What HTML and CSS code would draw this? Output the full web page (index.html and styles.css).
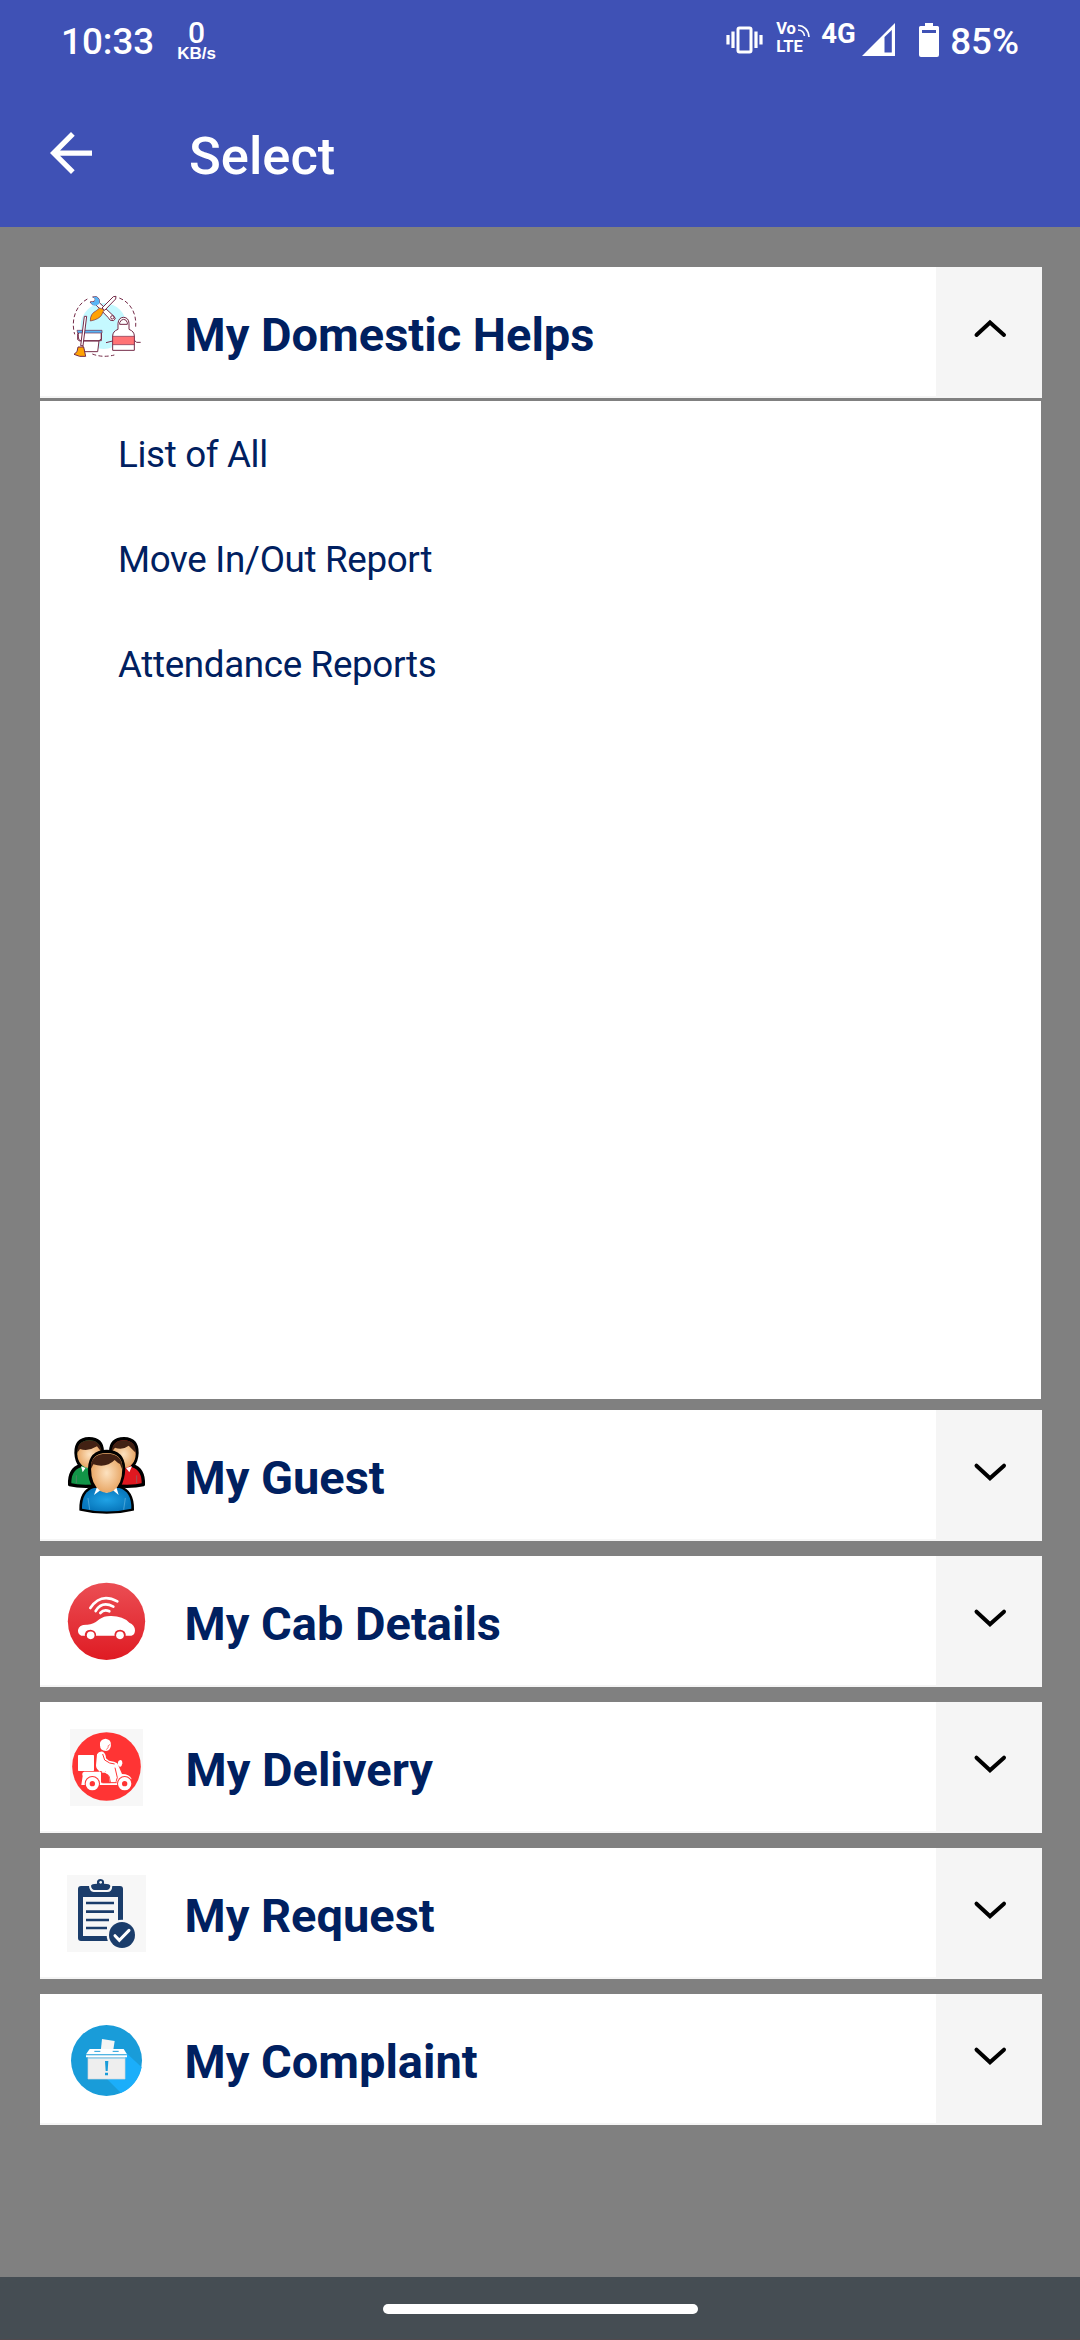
FILE: index.html
```html
<!DOCTYPE html>
<html lang="en">
<head>
<meta charset="utf-8">
<title>Select</title>
<link rel="stylesheet" href="styles.css">
</head>
<body>
<div class="screen">
  <header class="header">
    <div class="status">
      <span class="clock">10:33</span>
      <span class="speed"><span class="speed-value">0</span><span class="speed-unit">KB/s</span></span>
      <span class="spacer"></span>
      <svg class="vibrate" width="38" height="28" viewBox="0 0 38 28" fill="none" stroke="#fff" stroke-width="3"><rect x="12" y="2" width="13" height="24" rx="1.5"/><path d="M7 5.500V22M2 9V18.500M30 5.500V22M35 9V18.500" stroke-width="3.200"/></svg>
      <span class="volte"><span class="vo">Vo<svg width="13" height="14" viewBox="0 0 13 14" fill="none" stroke="#fff" stroke-width="1.600"><path d="M1 1.500C7 1.500 11.500 6 12 13M1 6C4.500 6 7 8.500 7.500 12"/></svg></span><span class="lte">LTE</span></span>
      <span class="network">4G</span>
      <svg class="signal" width="33" height="33" viewBox="0 0 33 33"><path fill="#fff" fill-rule="evenodd" d="M0 33 33 0V33ZM22.500 14V29.500H29.800V7Z"/></svg>
      <svg class="battery" width="20" height="34" viewBox="0 0 20 34"><path fill="#fff" fill-rule="evenodd" d="M6 0H14V3H18.500Q20 3 20 4.500V32Q20 34 18 34H2Q0 34 0 32V4.500Q0 3 1.500 3H6ZM3 7V10H17V7Z"/></svg>
      <span class="percent">85%</span>
    </div>
    <div class="toolbar">
      <svg class="back" width="42" height="42" viewBox="0 0 16 16"><path fill="#fff" d="M16 7H3.830L9.420 1.410 8 0 0 8l8 8 1.410-1.410L3.830 9H16Z"/></svg>
      <h1 class="title">Select</h1>
    </div>
  </header>

  <main class="content">
    <section class="group open">
      <div class="row">
        <svg class="icon" viewBox="111 36 240 387">
          <circle cx="221" cy="213" r="69" fill="#c5f9ff"/>
          <path d="M172 132C137 151 122 196 134 238M268 129C301 142 320 174 317 215M187 297Q218 309 253 300" fill="none" stroke="#742b48" stroke-width="3" stroke-dasharray="12 7"/>
          <path d="M188 126 199 125Q210 130 208 143L253 185Q260 193 250 197 239 199 234 187L197 149Q186 153 180 141L188 140 195 138 196 130Z" fill="#fff" stroke="#742b48" stroke-width="3"/>
          <path d="M188 126 199 125Q212 132 207 147L200 151Q188 154 181 142L193 140 196 131Z" fill="#58b5f5"/>
          <circle cx="247" cy="187" r="5" fill="#fff" stroke="#742b48" stroke-width="3"/>
          <path d="M216 159 250 125 258 124 257 132 224 166Z" fill="#fff" stroke="#742b48" stroke-width="3"/>
          <path d="M209 159 222 164 215 180Q207 193 181 198 180 176 199 167Z" fill="#ffa203" stroke="#742b48" stroke-width="2"/>
          <path d="M147 229H214V257H150Q141 249 147 229ZM155 258H207L203 290H163Z" fill="#fff" stroke="#742b48" stroke-width="3"/>
          <path d="M141 226H216V234H143Z" fill="#58b5f5" stroke="#742b48" stroke-width="2"/>
          <path d="M143 235V254L151 259M214 235V252L207 257" fill="none" stroke="#742b48" stroke-width="3"/>
          <path d="M163 184H170L159 272H152Z" fill="#fff" stroke="#742b48" stroke-width="3"/>
          <path d="M144 276H161L167 304H149L132 298 141 290Z" fill="#ffa203" stroke="#742b48" stroke-width="3"/>
          <path d="M264 223V205Q266 187 281 187 296 188 297 205V223Q313 229 313 243V286H248V243Q248 229 264 223ZM269 208V203Q273 193 281 193T292 203V208Z" fill="#fff" stroke="#742b48" stroke-width="3"/>
          <path d="M248 244H313V269H248Z" fill="#ff7375" stroke="#742b48" stroke-width="2"/>
          <path d="M228 263 240 260 248 258M313 256 320 262H332" fill="none" stroke="#742b48" stroke-width="3"/>
        </svg>
        <h2 class="label">My Domestic Helps</h2>
        <div class="toggle"><svg width="106" height="131" viewBox="0 0 106 131"><path d="M40.500 68 54 55.500 68 68"/></svg></div>
      </div>
      <ul class="items"><li>List of All</li><li>Move In/Out Report</li><li>Attendance Reports</li></ul>
    </section>

    <section class="group">
      <div class="row">
        <svg class="icon" viewBox="111 30 240 387">
          <defs>
            <radialGradient id="skin"><stop offset="0" stop-color="#fde2c0"/><stop offset="1" stop-color="#e8a766"/></radialGradient>
            <radialGradient id="blue"><stop offset="0" stop-color="#20a3e6"/><stop offset="1" stop-color="#0878bd"/></radialGradient>
          </defs>
          <g stroke="#000" stroke-width="10" stroke-linejoin="round">
            <path d="M119 254Q117 208 151 197Q139 183 138 159 137 117 177 116 217 117 217 155V256Q155 263 119 254Z" fill="#129447"/>
            <path d="M340 254Q342 208 308 197Q320 183 321 159 322 117 282 116 242 117 242 155V256Q304 263 340 254Z" fill="#df1820"/>
          </g>
          <ellipse cx="178" cy="163" rx="36" ry="41" fill="url(#skin)"/>
          <ellipse cx="281" cy="163" rx="36" ry="41" fill="url(#skin)"/>
          <path d="M142 158Q140 122 178 121 212 122 215 157L201 139Q176 155 150 147ZM317 158Q319 122 281 121 247 122 244 157L255 143Q278 151 296 137Z" fill="#422113"/>
          <path d="M153 199 175 207 167 203 158 217ZM306 199 288 204 298 217Z" fill="#fff"/>
          <path d="M139 226V249M320 226V249" stroke="#777" stroke-width="2"/>
          <path d="M191 260Q177 237 178 205 180 154 230 153 280 154 282 205 281 237 268 260 309 273 308 328 230 347 152 328 151 273 191 260Z" fill="#000" stroke="#000" stroke-width="8"/>
          <path d="M156 326Q155 275 192 264H268Q305 275 304 326 230 343 156 326Z" fill="url(#blue)"/>
          <path d="M202 258 192 285 211 271 230 278 249 271 266 285 258 258Z" fill="#fff"/>
          <path d="M183 205Q181 160 230 159 278 160 277 205 277 255 249 273 230 284 211 273 183 253 183 205Z" fill="url(#skin)"/>
          <path d="M183 207Q179 162 230 161 280 162 276 207L270 192Q263 189 254 180 229 205 190 193Z" fill="#422113"/>
          <path d="M174 294 179 329M286 294 281 329" stroke="#66b7df" stroke-width="2"/>
        </svg>
        <h2 class="label">My Guest</h2>
        <div class="toggle"><svg width="106" height="131" viewBox="0 0 106 131"><path d="M40.500 55.700 54 68.200 68 55.700"/></svg></div>
      </div>
    </section>

    <section class="group">
      <div class="row">
        <svg class="icon" viewBox="111 18 240 387">
          <defs><linearGradient id="cab" x2="0" y2="1"><stop offset="0" stop-color="#eb4e54"/><stop offset="1" stop-color="#df1b23"/></linearGradient></defs>
          <circle cx="229.500" cy="214" r="116" fill="url(#cab)"/>
          <path d="M181 174Q212 127 262 154M197 183Q216 152 250 170M211 189Q222 177 238 184" fill="none" stroke="#fff" stroke-width="8" stroke-linecap="round"/>
          <path d="M144 240Q147 223 172 224 190 224 208 208 222 197 244 198 279 198 298 218 314 224 315 241 315 255 304 257H154Q143 253 144 240Z" fill="#fff"/>
          <path d="M165 259Q162 240 182 239 200 241 198 259ZM254 259Q251 240 271 239 289 241 287 259Z" fill="#e12a31"/>
          <circle cx="182" cy="256" r="11.500" fill="#fff"/><circle cx="270" cy="256" r="11.500" fill="#fff"/>
        </svg>
        <h2 class="label">My Cab Details</h2>
        <div class="toggle"><svg width="106" height="131" viewBox="0 0 106 131"><path d="M40.500 55.700 54 68.200 68 55.700"/></svg></div>
      </div>
    </section>

    <section class="group">
      <div class="row">
        <svg class="icon" viewBox="111 21 240 387">
          <path d="M120 102H339V333H120Z" fill="#f7f7f7"/>
          <circle cx="229.500" cy="214.500" r="103" fill="#ff3434"/>
          <rect x="144" y="180" width="48" height="48" rx="2" fill="#fff"/>
          <path d="M210 143Q213 132 227 131 243 133 243 149 242 167 228 168 210 168 210 151Z" fill="#fff"/>
          <path d="M241 148Q232 151 234 158L229 164" fill="none" stroke="#ff3434" stroke-width="2"/>
          <path d="M201 178Q207 167 219 170 228 176 228 190L237 197 252 200 262 205 276 237Q298 237 305 252L296 257Q280 240 264 264V270H207Q203 242 171 251L166 270H154L158 243Q154 231 163 230H210Q198 223 198 211Z" fill="#fff"/>
          <path d="M218 177 224 195 239 204 254 207M210 230H215V263H241L238 239Q236 231 225 229M255 218 262 248 257 262" fill="none" stroke="#ff3434" stroke-width="3"/>
          <path d="M213 233H226L236 240 239 261H213Z" fill="#ff3434"/>
          <path d="M218 263H260" stroke="#ff3434" stroke-width="3"/>
          <path d="M226 234Q238 234 243 258L257 261 252 226 226 216Z" fill="#fff"/>
          <circle cx="187" cy="266" r="23" fill="#ff3434"/><circle cx="187" cy="266" r="14" fill="none" stroke="#fff" stroke-width="12"/>
          <circle cx="284" cy="266" r="23" fill="#ff3434"/><circle cx="284" cy="266" r="14" fill="none" stroke="#fff" stroke-width="12"/>
          <path d="M264 211V201Q265 196 271 195 277 195 277 205 276 214 270 216Z" fill="#fff"/>
        </svg>
        <h2 class="label nudge">My Delivery</h2>
        <div class="toggle"><svg width="106" height="131" viewBox="0 0 106 131"><path d="M40.500 55.700 54 68.200 68 55.700"/></svg></div>
      </div>
    </section>

    <section class="group">
      <div class="row">
        <svg class="icon" viewBox="111 24 240 387">
          <path d="M111 105H348V336H111Z" fill="#f7f7f7"/>
          <rect x="144" y="138" width="135" height="165" rx="9" fill="#1b3d6b"/>
          <path d="M159 171H264V288H159Z" fill="#f7f7f7"/>
          <path d="M177 137H247Q246 156 232 156H191Q178 154 177 137Z" fill="#f7f7f7"/>
          <path d="M183 137Q184 131 201 131 199 117 212 117 224 118 222 131 240 131 241 138 239 150 230 150H194Q184 149 183 137Z" fill="#1b3d6b"/>
          <circle cx="212" cy="127" r="4" fill="#f7f7f7"/>
          <path d="M168 189H252M168 215H252M168 240H237M168 264H231" stroke="#1b3d6b" stroke-width="8"/>
          <circle cx="276" cy="285" r="46" fill="#f7f7f7"/><circle cx="276" cy="285" r="39" fill="#1b3d6b"/>
          <path d="M255 287 268 301 297 271" fill="none" stroke="#fff" stroke-width="9" stroke-linecap="round"/>
        </svg>
        <h2 class="label">My Request</h2>
        <div class="toggle"><svg width="106" height="131" viewBox="0 0 106 131"><path d="M40.500 55.700 54 68.200 68 55.700"/></svg></div>
      </div>
    </section>

    <section class="group">
      <div class="row">
        <svg class="icon" viewBox="111 27 240 387">
          <circle cx="229.500" cy="226.500" r="106.500" fill="#199cd9"/>
          <path d="M290 205 335 247A106 106 0 0 1 273 324L231 282Z" fill="#1baefa"/>
          <path d="M216 162 254 168 249 200H212Z" fill="#f5f5f5"/>
          <path d="M179 192H281L291 208H168Z" fill="#fff"/>
          <path d="M193 199H211M248 199H266" stroke="#199cd9" stroke-width="3"/>
          <path d="M168 211H291V217H168Z" fill="#fff"/>
          <path d="M174 218H285V282H174Z" fill="#eee" stroke="#d2d8dc" stroke-width="2"/>
          <path d="M174 218H285V221H174Z" fill="#8fd0ee"/>
          <path d="M225 228H235L233 258H227ZM225 263H234V271H225Z" fill="#199cd9"/>
        </svg>
        <h2 class="label">My Complaint</h2>
        <div class="toggle"><svg width="106" height="131" viewBox="0 0 106 131"><path d="M40.500 55.700 54 68.200 68 55.700"/></svg></div>
      </div>
    </section>
  </main>

  <footer class="navbar"><div class="pill"></div></footer>
</div>
</body>
</html>
```
FILE: styles.css
```css
* { box-sizing: border-box; }
body { margin: 0; font-family: Roboto, "Liberation Sans", sans-serif; }
h1, h2, ul { margin: 0; padding: 0; }
svg { display: block; flex: none; }
.screen { width: 1080px; height: 2340px; display: flex; flex-direction: column; background: #808080; }

.header { height: 227px; background: #3f51b5; color: #fff; }
.status { height: 80px; display: flex; align-items: flex-start; padding: 0 61px 0 61px; font-weight: 500; }
.clock { font-size: 36.750px; line-height: 44px; margin-top: 20px; }
.speed { display: flex; flex-direction: column; align-items: center; margin: 18px 0 0 23px; }
.speed-value { font-size: 30px; line-height: 29px; }
.speed-unit { font: bold 17px/13px "Liberation Sans", sans-serif; }
.spacer { flex: 1; }
.vibrate { margin-top: 26px; }
.volte { display: flex; flex-direction: column; margin: 21px 0 0 12px; width: 34px; font-size: 16.500px; font-weight: 700; }
.vo { display: flex; gap: 1px; line-height: 16px; }
.vo svg { margin-top: 3px; }
.lte { line-height: 17px; }
.network { font-size: 27.500px; line-height: 32px; font-weight: 700; margin: 18px 0 0 11px; width: 37px; }
.signal { margin: 23px 0 0 4px; }
.battery { margin: 23px 0 0 24px; }
.percent { font-size: 36.750px; line-height: 44px; margin: 20px 0 0 11px; }

.toolbar { display: flex; align-items: flex-start; padding-left: 50px; }
.back { margin-top: 52px; }
.title { font-size: 52.500px; line-height: 62px; font-weight: 500; margin: 45px 0 0 97px; }

.content { flex: 1; padding: 40px 38px 0 40px; display: flex; flex-direction: column; gap: 15px; }
.open { margin-bottom: -4px; }
.row { height: 131px; display: flex; align-items: flex-start; background: #fff; box-shadow: inset 0 -2px #f5f5f5; }
.icon { width: 80px; height: 129px; margin-left: 27px; }
.label { flex: 1; font-size: 47px; line-height: 56px; font-weight: 700; color: #002060; margin: 40px 0 0 37.500px; white-space: nowrap; }
.label.nudge { padding-left: 1px; }
.toggle { width: 106px; height: 131px; background: #f5f5f5; }
.toggle path { fill: none; stroke: #000; stroke-width: 4; stroke-linecap: round; }
.items { list-style: none; height: 998px; margin: 3px 1px 0 0; padding: 1px 0 0 78px; background: #fff; color: #002060; font-size: 36.750px; letter-spacing: -0.340px; line-height: 105px; }

.navbar { height: 63px; background: #454d53; padding-top: 27px; display: flex; justify-content: center; align-items: flex-start; border-bottom: 1px solid #50494d; }
.pill { width: 315px; height: 10px; border-radius: 5px; background: #fff; }
```
